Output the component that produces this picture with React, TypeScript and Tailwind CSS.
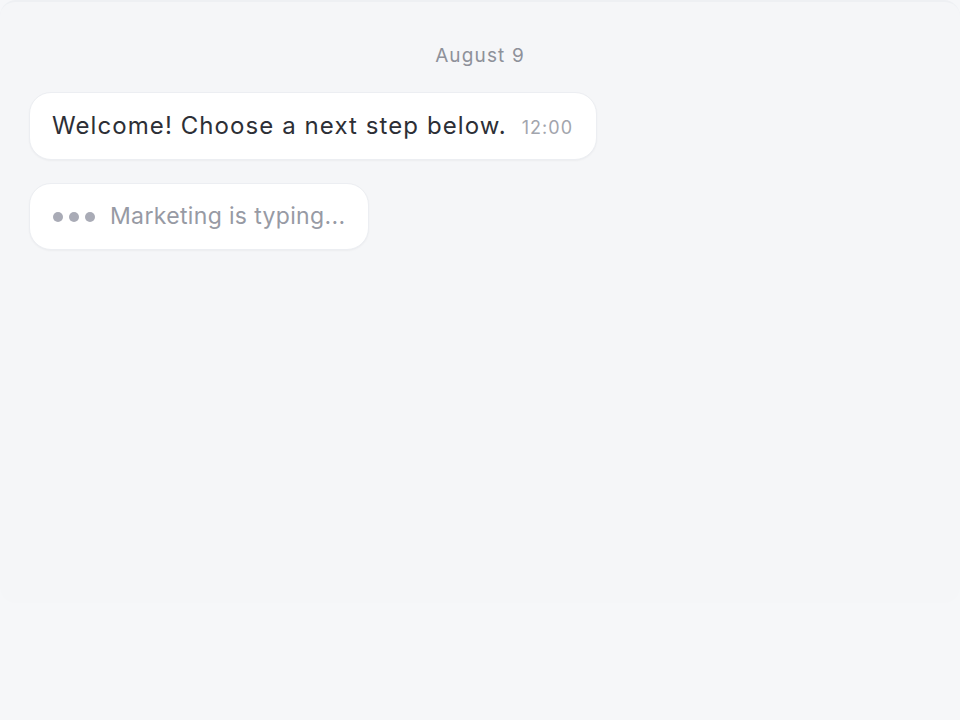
export default function App() {
  return (
    <div
      className="min-h-screen w-full bg-[#f6f7f9]"
      style={{ fontFamily: "Inter, 'Noto Sans', sans-serif" }}
    >
      <div className="h-[603px] w-full rounded-2xl border-t-2 border-[#eef0f3] bg-[#f5f6f8] px-[29px] pt-[40px]">
        <div className="flex justify-center">
          <span className="text-[19px] leading-[28px] tracking-[0.06em] text-[#8e919a]">August 9</span>
        </div>
        <div className="mt-[22px] flex flex-col items-start gap-[23px]">
          <div className="flex h-[68px] items-center gap-[15px] rounded-[22px] border border-[#eceef2] bg-white pl-[22px] pr-[23px] shadow-[0_1px_2px_rgba(0,0,0,0.04)]">
            <span className="text-[24px] leading-none tracking-[0.045em] text-[#2d2f36]">
              Welcome! Choose a next step below.
            </span>
            <span className="mt-[4px] text-[18px] leading-none tracking-[0.06em] text-[#a2a5ad]">12:00</span>
          </div>
          <div className="flex h-[67px] items-center gap-[15px] rounded-[22px] border border-[#eceef2] bg-white pl-[23px] pr-[23px] shadow-[0_1px_2px_rgba(0,0,0,0.04)]">
            <div className="flex items-center gap-[6px]">
              <span className="h-[10px] w-[10px] rounded-full bg-[#a9abb6]" />
              <span className="h-[10px] w-[10px] rounded-full bg-[#a9abb6]" />
              <span className="h-[10px] w-[10px] rounded-full bg-[#a9abb6]" />
            </div>
            <span className="text-[23px] leading-none tracking-[0.015em] text-[#979aa4]">Marketing is typing...</span>
          </div>
        </div>
      </div>
    </div>
  );
}
